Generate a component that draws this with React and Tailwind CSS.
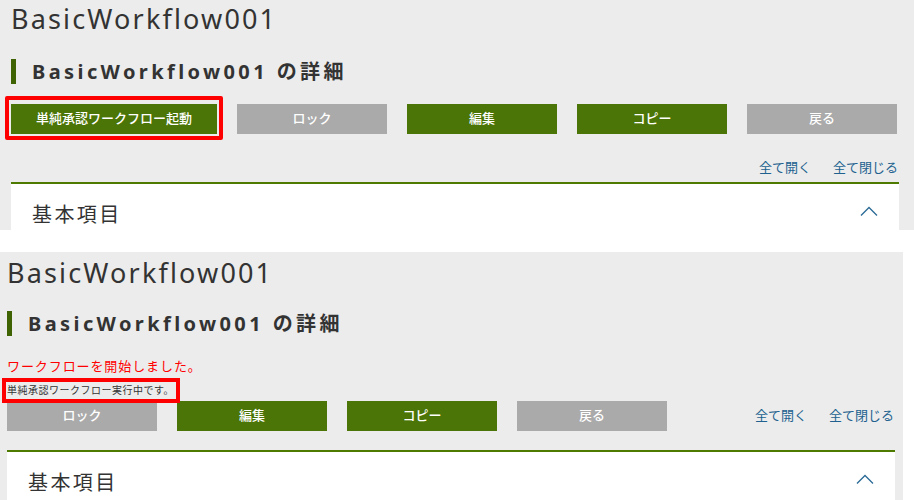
const font = "font-['Noto_Sans','Noto_Sans_CJK_JP',sans-serif]";

const Chevron = () => (
  <svg width="18" height="10" viewBox="0 0 18 10" fill="none">
    <polyline points="1,9.5 9,1.5 17,9.5" stroke="#2a6a96" strokeWidth="1.3" />
  </svg>
);

function Btn({ label, green }) {
  return (
    <button
      className={`h-[30px] w-[150px] shrink-0 text-[13px] font-medium text-white ${
        green ? "bg-[#4b7506]" : "bg-[#aaaaaa]"
      }`}
    >
      {label}
    </button>
  );
}

function Links() {
  return (
    <div className="flex gap-[22px] text-[13px] text-[#21618f]">
      <span>全て開く</span>
      <span>全て閉じる</span>
    </div>
  );
}

function Heading() {
  return (
    <>
      <h1 className="text-[27px] leading-[32px] tracking-[0.08em] text-[#333]">
        BasicWorkflow001
      </h1>
      <h2 className="flex h-[25px] items-center border-l-[5px] border-[#3f6203] pl-[16px] text-[20px] font-bold leading-[25px] tracking-[0.17em] text-[#333]">
        BasicWorkflow001 の詳細
      </h2>
    </>
  );
}

function Card() {
  return (
    <div className="flex h-[60px] items-start justify-between border-t-2 border-[#4e7a00] bg-white pl-[21px] pr-[21px] pt-[19px]">
      <span className="text-[20px] leading-[24px] tracking-[0.12em] text-[#333]">基本項目</span>
      <div className="pt-[3px]">
        <Chevron />
      </div>
    </div>
  );
}

export default function App() {
  return (
    <div className={`flex h-[500px] w-[914px] flex-col overflow-hidden bg-white ${font}`}>
      {/* before */}
      <div className="flex h-[230px] shrink-0 flex-col overflow-hidden bg-[#ececec] pl-[11px] pr-[15px] pt-[3px]">
        <div className="flex flex-col gap-[24px]">
          <Heading />
        </div>
        <div className="mt-[20px] flex gap-[20px]">
          <div className="relative">
            <button className="h-[30px] w-[206px] bg-[#4b7506] text-[13px] font-medium text-white">
              単純承認ワークフロー起動
            </button>
            <div className="absolute -bottom-[6px] -left-[6px] -right-[6px] -top-[8px] rounded-[2px] border-4 border-[#ff0000]" />
          </div>
          <Btn label="ロック" />
          <Btn label="編集" green />
          <Btn label="コピー" green />
          <Btn label="戻る" />
        </div>
        <div className="mt-[24px] flex justify-end pr-[1px]">
          <Links />
        </div>
        <div className="mt-[4px]">
          <Card />
        </div>
      </div>

      {/* after */}
      <div className="mt-[22px] flex h-[248px] w-[903px] shrink-0 flex-col overflow-hidden bg-[#ececec] pl-[7px] pr-[8px] pt-[5px]">
        <div className="flex flex-col gap-[22px]">
          <Heading />
        </div>
        <p className="mt-[21px] text-[13px] leading-[18px] tracking-[0.07em] text-[#ff0000]">
          ワークフローを開始しました。
        </p>
        <div className="relative mt-[8px] self-start">
          <p className="text-[10px] leading-[14px] tracking-[0.05em] text-[#333]">
            単純承認ワークフロー実行中です。
          </p>
          <div className="absolute -bottom-[6px] -left-[5px] -right-[6px] -top-[5px] border-4 border-[#ff0000]" />
        </div>
        <div className="mt-[4px] flex items-center justify-between">
          <div className="flex gap-[20px]">
            <Btn label="ロック" />
            <Btn label="編集" green />
            <Btn label="コピー" green />
            <Btn label="戻る" />
          </div>
          <div className="pr-[1px]">
            <Links />
          </div>
        </div>
        <div className="mt-[19px]">
          <Card />
        </div>
      </div>
    </div>
  );
}
